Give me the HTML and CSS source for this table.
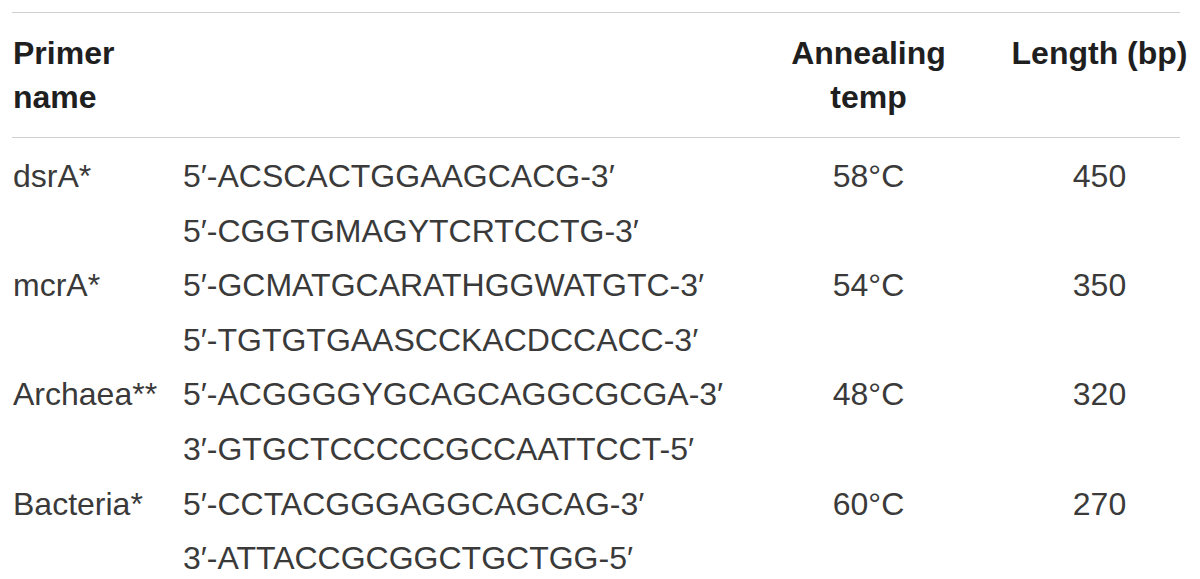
FILE: index.html
```html
<!DOCTYPE html>
<html>
<head>
<meta charset="utf-8">
<link rel="stylesheet" href="styles.css">
</head>
<body>
<table class="primers">
  <colgroup>
    <col class="c-name">
    <col class="c-seq">
    <col class="c-temp">
    <col class="c-len">
  </colgroup>
  <thead>
    <tr>
      <th class="h-left">Primer<br>name</th>
      <th></th>
      <th class="h-center">Annealing<br>temp</th>
      <th class="h-center"><span class="wide">Length (bp)</span></th>
    </tr>
  </thead>
  <tbody>
    <tr>
      <td>dsrA*</td>
      <td>5′-ACSCACTGGAAGCACG-3′<br>5′-CGGTGMAGYTCRTCCTG-3′</td>
      <td class="center">58°C</td>
      <td class="center">450</td>
    </tr>
    <tr>
      <td>mcrA*</td>
      <td>5′-GCMATGCARATHGGWATGTC-3′<br>5′-TGTGTGAASCCKACDCCACC-3′</td>
      <td class="center">54°C</td>
      <td class="center">350</td>
    </tr>
    <tr>
      <td>Archaea**</td>
      <td>5′-ACGGGGYGCAGCAGGCGCGA-3′<br>3′-GTGCTCCCCCGCCAATTCCT-5′</td>
      <td class="center">48°C</td>
      <td class="center">320</td>
    </tr>
    <tr>
      <td>Bacteria*</td>
      <td>5′-CCTACGGGAGGCAGCAG-3′<br>3′-ATTACCGCGGCTGCTGG-5′</td>
      <td class="center">60°C</td>
      <td class="center">270</td>
    </tr>
  </tbody>
</table>
</body>
</html>
```

FILE: styles.css
```css
html, body {
  margin: 0;
  padding: 0;
  background: #ffffff;
}

body {
  padding: 12px 20px 0 12px;
  font-family: "Liberation Sans", Arial, sans-serif;
  color: #333333;
}

.primers {
  width: 1168px;
  table-layout: fixed;
  border-collapse: collapse;
}

.c-name { width: 170px; }
.c-seq { width: 536px; }
.c-temp { width: 300px; }
.c-len { width: 162px; }

.primers thead tr {
  border-top: 1px solid #cfcfcf;
  border-bottom: 1px solid #cfcfcf;
}

.primers th {
  font-weight: 700;
  font-size: 32px;
  line-height: 44px;
  color: #1f1f1f;
  padding: 18px 0 18px 1px;
  vertical-align: top;
  white-space: nowrap;
}

.h-left { text-align: left; }
.h-center { text-align: center; }

.wide {
  display: inline-block;
  margin: 0 -12px;
}

.primers td {
  font-size: 32px;
  line-height: 54.6px;
  padding: 0 0 0 1px;
  vertical-align: top;
  white-space: nowrap;
  color: #3a3a3a;
}

.primers tbody tr:first-child td {
  padding-top: 11px;
}

.center { text-align: center; }
```
